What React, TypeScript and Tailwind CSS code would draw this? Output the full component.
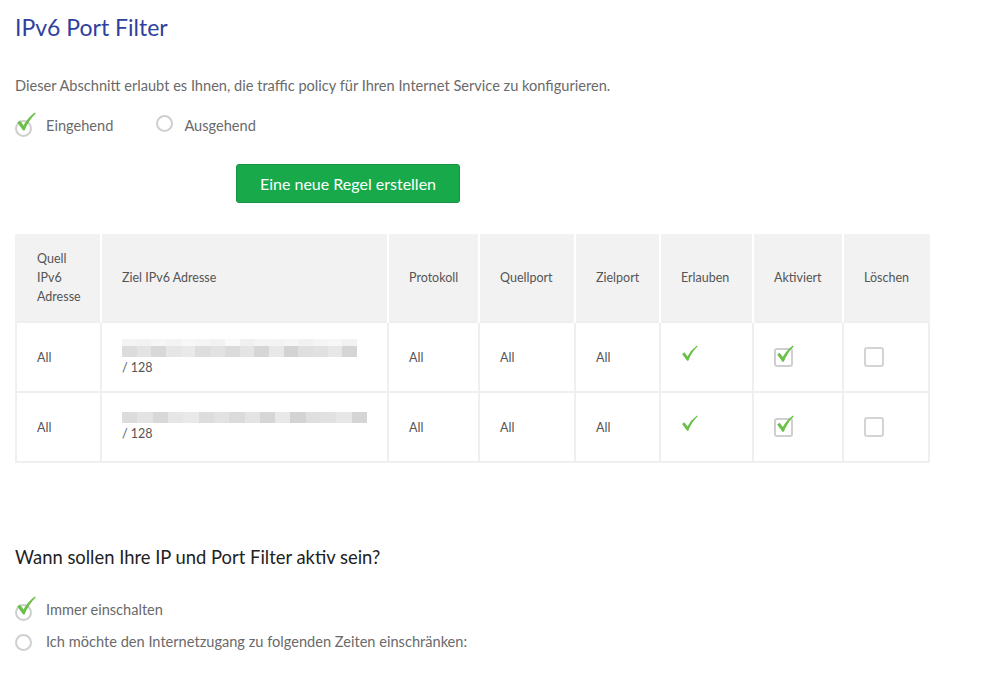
import React from "react";

const Check = ({ className = "" }: { className?: string }) => (
  <svg viewBox="0 0 20 20" className={className} fill="#6cc04a">
    <path d="M1.3 10.6 L4 8.6 L7.6 13.4 Q11.5 6 18.8 0.6 L19.7 1.6 Q12.5 8.5 8.6 18.6 L7.1 18.6 Z" />
  </svg>
);

const RadioChecked = () => (
  <span className="relative inline-block w-[19px] h-[19px]">
    <span className="absolute left-0 top-[3px] w-[17px] h-[17px] rounded-full border-2 border-[#cfcfcf] bg-white" />
    <Check className="absolute left-[1px] top-[-5px] w-[20px] h-[20px]" />
  </span>
);

const RadioEmpty = () => (
  <span className="inline-block w-[17px] h-[17px] rounded-full border-2 border-[#cfcfcf] bg-white" />
);

const BoxChecked = () => (
  <span className="relative inline-block w-[20px] h-[21px]">
    <span className="absolute left-0 top-[2px] w-[19px] h-[19px] rounded-[3px] border-2 border-[#cfcfcf] bg-white" />
    <Check className="absolute left-[2px] top-[-2px] w-[18px] h-[20px]" />
  </span>
);

const BoxEmpty = () => (
  <span className="inline-block w-[20px] h-[20px] rounded-[3px] border-2 border-[#d4d4d4] bg-white" />
);

const shadesA = ["#f4f4f4","#f2f2f2","#f6f6f6","#f3f3f3","#f7f7f7","#f5f5f5","#f2f2f2","#fafafa","#f0f0f0","#f4f4f4","#f3f3f3","#f6f6f6","#f1f1f1","#f5f5f5","#f7f7f7","#f2f2f2"];
const shadesB = ["#dcdcdc","#e3e3e3","#d8d8d8","#e6e6e6","#e9e9e9","#dddddd","#e2e2e2","#dbdbdb","#e4e4e4","#d6d6d6","#e8e8e8","#d3d3d3","#dfdfdf","#e1e1e1","#e7e7e7","#d5d5d5"];

const Blur = ({ w, two }: { w: number; two: boolean }) => (
  <div className="flex flex-col">
    {two && (
      <div className="flex h-[7px]" style={{ width: w }}>
        {shadesA.map((c, i) => (
          <div key={i} className="flex-1" style={{ background: c }} />
        ))}
      </div>
    )}
    <div className="flex h-[11px]" style={{ width: w }}>
      {shadesB.map((c, i) => (
        <div key={i} className="flex-1" style={{ background: c }} />
      ))}
    </div>
  </div>
);

const headers = [
  { t: "Quell IPv6 Adresse", w: "w-[85px]" },
  { t: "Ziel IPv6 Adresse", w: "w-[287px]" },
  { t: "Protokoll", w: "w-[91px]" },
  { t: "Quellport", w: "w-[96px]" },
  { t: "Zielport", w: "w-[85px]" },
  { t: "Erlauben", w: "w-[93px]" },
  { t: "Aktiviert", w: "w-[90px]" },
  { t: "Löschen", w: "w-[86px]" },
];

export default function App() {
  const font = { fontFamily: "Lato, 'Open Sans', sans-serif" };
  return (
    <div className="bg-white min-h-[699px] pl-[15px] text-[#6a6a6a]" style={font}>
      <h1 className="text-[23px] text-[#2f3f9d] pt-[11px] leading-[32px] font-normal">IPv6 Port Filter</h1>
      <p className="mt-[33px] text-[14.6px] leading-[20px]">
        Dieser Abschnitt erlaubt es Ihnen, die traffic policy für Ihren Internet Service zu konfigurieren.
      </p>
      <div className="mt-[20px] flex items-center h-[20px] text-[14.6px]">
        <RadioChecked />
        <span className="ml-[12px]">Eingehend</span>
        <span className="ml-[43px]"><RadioEmpty /></span>
        <span className="ml-[11px]">Ausgehend</span>
      </div>
      <div className="mt-[28px] pl-[221px]">
        <button className="w-[224px] h-[39px] rounded-[3px] bg-[#17a94a] border border-[#149141] text-white text-[16px]" style={font}>
          Eine neue Regel erstellen
        </button>
      </div>
      <table className="mt-[31px] table-fixed w-[913px] border-collapse text-[12.5px] text-[#555]">
        <thead>
          <tr className="h-[88px] bg-[#f2f2f2]">
            {headers.map((h, i) => (
              <th
                key={i}
                className={`${h.w} font-normal text-left align-middle pl-[20px] pr-[6px] leading-[19px] border-x-2 border-white first:border-l-[#f2f2f2] last:border-r-[#f2f2f2] ${i === 0 ? "pr-[20px]" : ""}`}
              >
                {h.t}
              </th>
            ))}
          </tr>
        </thead>
        <tbody>
          {[0, 1].map((r) => (
            <tr key={r} className="h-[70px]">
              <td className="border-2 border-[#efefef] pl-[20px] pt-[3px]">All</td>
              <td className="border-2 border-[#efefef] pl-[20px]">
                <div className="flex flex-col">
                  <Blur w={r === 0 ? 235 : 245} two={r === 0} />
                  <span className="mt-[3px] leading-[16px]">/ 128</span>
                </div>
              </td>
              <td className="border-2 border-[#efefef] pl-[20px] pt-[3px]">All</td>
              <td className="border-2 border-[#efefef] pl-[20px] pt-[3px]">All</td>
              <td className="border-2 border-[#efefef] pl-[20px] pt-[3px]">All</td>
              <td className="border-2 border-[#efefef] pl-[20px]">
                <Check className="w-[17px] h-[19px] -mt-[8px]" />
              </td>
              <td className="border-2 border-[#efefef] pl-[20px]">
                <div className="flex -mt-[2px]"><BoxChecked /></div>
              </td>
              <td className="border-2 border-[#efefef] pl-[20px]">
                <div className="flex"><BoxEmpty /></div>
              </td>
            </tr>
          ))}
        </tbody>
      </table>
      <h2 className="mt-[80px] text-[18.4px] leading-[28px] text-[#222]">Wann sollen Ihre IP und Port Filter aktiv sein?</h2>
      <div className="mt-[29px] flex items-center h-[20px] text-[14.6px]">
        <RadioChecked />
        <span className="ml-[12px]">Immer einschalten</span>
      </div>
      <div className="mt-[12px] flex items-center h-[20px] text-[14.6px]">
        <RadioEmpty />
        <span className="ml-[14px]">Ich möchte den Internetzugang zu folgenden Zeiten einschränken:</span>
      </div>
    </div>
  );
}
